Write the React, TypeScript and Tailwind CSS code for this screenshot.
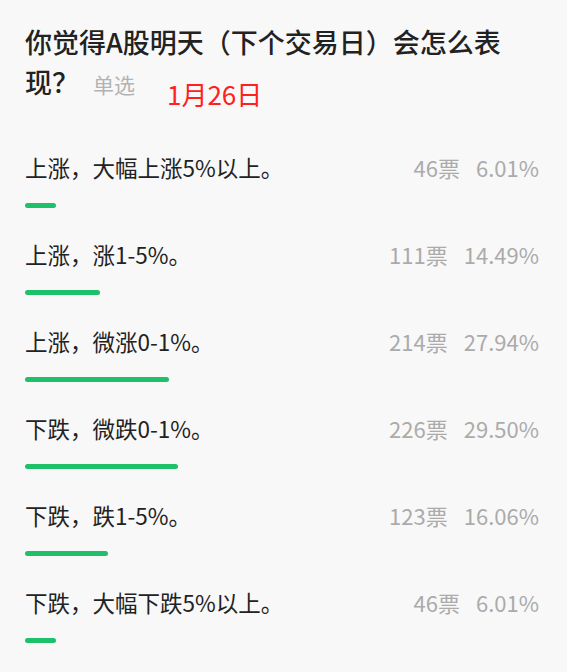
import React from "react";

const options = [
  { label: "上涨，大幅上涨5%以上。", votes: 46, pct: "6.01" },
  { label: "上涨，涨1-5%。", votes: 111, pct: "14.49" },
  { label: "上涨，微涨0-1%。", votes: 214, pct: "27.94" },
  { label: "下跌，微跌0-1%。", votes: 226, pct: "29.50" },
  { label: "下跌，跌1-5%。", votes: 123, pct: "16.06" },
  { label: "下跌，大幅下跌5%以上。", votes: 46, pct: "6.01" },
];

export default function App() {
  return (
    <div
      className="relative w-[567px] h-[672px] overflow-hidden bg-[#f8f8f8] px-[25px] pt-[22px]"
      style={{ fontFamily: '"Noto Sans CJK SC", "Noto Sans", sans-serif' }}
    >
      <div className="text-[27px] leading-[40px] font-medium text-[#222222] pr-[2px]">
        你觉得A股明天（下个交易日）会怎么表现？
        <span className="ml-[14px] text-[21px] font-normal text-[#b3b3b3]">单选</span>
      </div>
      <div className="absolute left-[167px] top-[77px] text-[26px] leading-[34px] text-[#ff2020]">
        1月26日
      </div>
      <div className="mt-[48px] flex flex-col">
        {options.map((o, i) => (
          <div key={i} className="flex flex-col pb-[31px]">
            <div className="flex items-center justify-between h-[30px] leading-[30px]">
              <span className="text-[22.5px] text-[#222222]">{o.label}</span>
              <span className="flex gap-[16px] text-[22px] font-normal text-[#ababab] pr-[3px]">
                <span>{o.votes}票</span>
                <span>{o.pct}%</span>
              </span>
            </div>
            <div className="mt-[21px] h-[5px] w-full">
              <div
                className="h-[5px] rounded-full bg-[#1fc06a]"
                style={{ width: `${o.pct}%` }}
              />
            </div>
          </div>
        ))}
      </div>
    </div>
  );
}
